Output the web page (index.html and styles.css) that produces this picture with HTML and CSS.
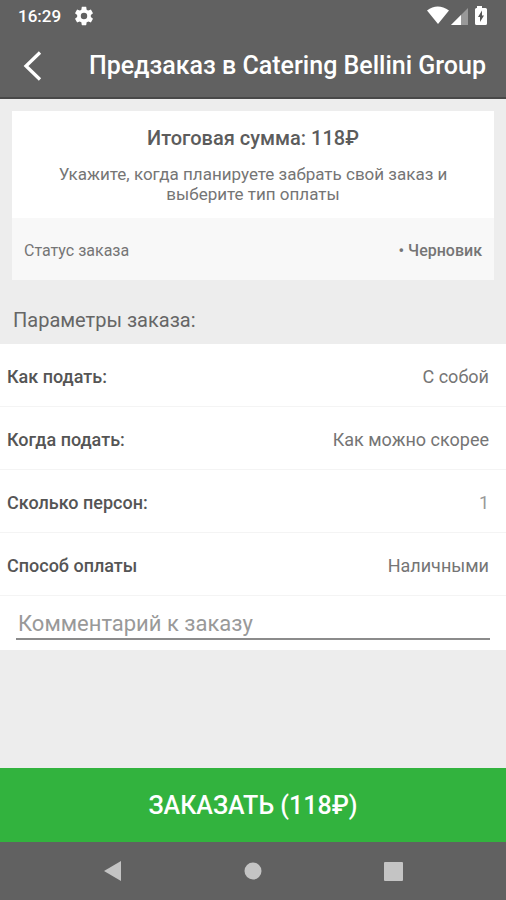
FILE: index.html
```html
<!DOCTYPE html>
<html lang="ru">
<head>
<meta charset="utf-8">
<meta name="viewport" content="width=device-width, initial-scale=1">
<title>Предзаказ</title>
<link rel="stylesheet" href="styles.css">
</head>
<body>
<div class="status-bar">
  <span class="clock">16:29</span>
  <svg class="gear" viewBox="0 0 24 24" width="22" height="22"><path fill="#fff" fill-rule="evenodd" d="M19.43 12.98c.04-.32.07-.64.07-.98s-.03-.66-.07-.98l2.11-1.65c.19-.15.24-.42.12-.64l-2-3.46c-.12-.22-.39-.3-.61-.22l-2.49 1c-.52-.4-1.08-.73-1.69-.98l-.38-2.65C14.46 2.180 14.250 2 14 2h-4c-.25 0-.46.18-.49.42l-.38 2.650c-.61.25-1.170.59-1.690.98l-2.490-1c-.23-.09-.49 0-.61.22l-2 3.460c-.13.22-.07.49.12.64l2.110 1.650c-.04.32-.07.65-.07.98s.03.66.07.98l-2.110 1.650c-.19.15-.24.42-.12.64l2 3.460c.12.22.39.3.61.22l2.490-1c.52.4 1.080.73 1.690.98l.38 2.650c.03.24.24.42.49.42h4c.25 0 .46-.18.49-.42l.38-2.650c.61-.25 1.170-.59 1.690-.98l2.490 1c.23.09.49 0 .61-.22l2-3.460c.12-.22.07-.49-.12-.64l-2.110-1.650zM12 15.500a3.500 3.500 0 1 1 0-7 3.500 3.500 0 0 1 0 7z"/></svg>
  <svg class="signals" viewBox="0 0 62 22" width="62" height="22">
    <path fill="#fff" d="M0 5.500Q10.500-2.500 22 5.500L11 19z"/>
    <path fill="#999" d="M41 3v17H24z"/>
    <path fill="#fff" d="M34 10v10H24z"/>
    <path fill="#fff" d="M50 1h5v2h3.500q1.500 0 1.500 1.500v14q0 1.500-1.500 1.500h-9q-1.500 0-1.500-1.500v-14Q48 3 49.500 3h.5z"/>
    <path fill="#555" d="M55 5.500v5h2L53 17v-5h-2z"/>
  </svg>
</div>
<header class="app-bar">
  <button class="back" type="button" aria-label="Назад">
    <svg viewBox="0 0 20 32" width="20" height="32"><path d="M17 2.500L3 16 17 29.500" fill="none" stroke="#fff" stroke-width="3.300"/></svg>
  </button>
  <h1>Предзаказ в Catering Bellini Group</h1>
</header>
<main>
  <section class="card">
    <div class="summary">
      <h2>Итоговая сумма: 118₽</h2>
      <p>Укажите, когда планируете забрать свой заказ и выберите тип оплаты</p>
    </div>
    <div class="state"><span>Статус заказа</span><b>• Черновик</b></div>
  </section>
  <h3>Параметры заказа:</h3>
  <form class="params" id="order">
    <button class="row" type="button"><b>Как подать:</b><span>С собой</span></button>
    <button class="row" type="button"><b>Когда подать:</b><span>Как можно скорее</span></button>
    <label class="row"><b>Сколько персон:</b><input class="persons" type="text" inputmode="numeric" placeholder="1"></label>
    <button class="row" type="button"><b>Способ оплаты</b><span>Наличными</span></button>
    <div class="comment"><input type="text" aria-label="Комментарий к заказу" placeholder="Комментарий к заказу"></div>
  </form>
</main>
<button class="order" type="submit" form="order">ЗАКАЗАТЬ (118₽)</button>
<nav class="system-nav">
  <button type="button" aria-label="Назад"><svg viewBox="0 0 20 22" width="20" height="22"><path fill="#c4c4c4" d="M18 1v20L1 11z"/></svg></button>
  <button type="button" aria-label="Домой"><svg viewBox="0 0 20 22" width="20" height="22"><circle cx="10" cy="11" r="8.500" fill="#c4c4c4"/></svg></button>
  <button type="button" aria-label="Недавние"><svg viewBox="0 0 20 22" width="20" height="22"><rect x="1" y="2" width="19" height="19" rx="1" fill="#c4c4c4"/></svg></button>
</nav>
</body>
</html>
```
FILE: styles.css
```css
* { box-sizing: border-box; }
body {
  margin: 0;
  min-height: 100vh;
  display: flex;
  flex-direction: column;
  background: #ededed;
  color: #757575;
  font-family: Roboto, "Noto Sans", sans-serif;
}
h1, h2, h3, p { margin: 0; }
button, input { font: inherit; color: inherit; border: 0; background: none; padding: 0; }
svg { display: block; }

.status-bar {
  display: flex;
  align-items: center;
  height: 32px;
  padding: 0 17px 0 18px;
  background: #616161;
  color: #fff;
}
.clock { font-size: 17px; font-weight: 500; }
.gear { margin-left: 12px; }
.signals { margin-left: auto; }

.app-bar {
  display: flex;
  align-items: center;
  height: 67px;
  padding: 2px 20px 0;
  background: #616161;
  border-bottom: 2px solid #484848;
  color: #fff;
}
.back { width: 69px; padding-left: 3px; }
.app-bar h1 { font-size: 25px; font-weight: 500; white-space: nowrap; }

main { flex: 1; }
.card { margin: 12px 12px 0; background: #fff; }
.summary { padding: 15px 24px 14px; text-align: center; }
.summary h2 { font-size: 20px; line-height: 24px; font-weight: 500; color: #5c5c5c; margin-bottom: 14px; }
.summary p { font-size: 17px; line-height: 20px; }
.state {
  display: flex;
  align-items: center;
  justify-content: space-between;
  height: 62px;
  padding: 2px 12px 0;
  background: #f8f8f8;
  font-size: 16px;
}
.state b { font-weight: 500; }
h3 { padding: 28px 13px 12px; font-size: 20px; line-height: 24px; font-weight: 400; color: #666; }

.params { background: #fff; }
.row {
  display: flex;
  align-items: center;
  justify-content: space-between;
  width: 100%;
  height: 63px;
  padding: 2px 17px 0 7px;
  border-bottom: 1px solid #f4f4f4;
  font-size: 18px;
  text-align: left;
}
.row b { font-weight: 500; color: #555; }
.persons { width: 80px; text-align: right; }
::placeholder { color: #999; opacity: 1; }
.comment { padding: 10px 16px; }
.comment input {
  display: block;
  width: 100%;
  height: 34px;
  padding: 2px 2px 0;
  border-bottom: 2px solid #8b8b8b;
  font-size: 22px;
}

.order { height: 74px; background: #32b33e; color: #fff; font-size: 25px; font-weight: 500; }
.system-nav {
  display: flex;
  justify-content: center;
  gap: 120px;
  height: 58px;
  background: #616161;
}
```
